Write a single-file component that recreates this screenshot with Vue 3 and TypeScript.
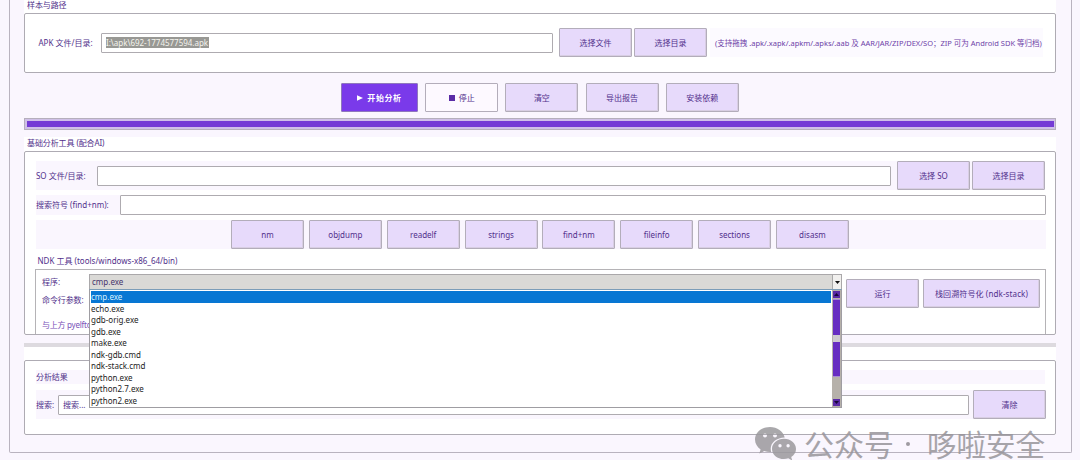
<script setup lang="ts">
import { ref } from 'vue'

const actions: string[] = ['清空', '导出报告', '安装依赖']
const tools: string[] = ['nm', 'objdump', 'readelf', 'strings', 'find+nm', 'fileinfo', 'sections', 'disasm']
const programs: string[] = [
  'cmp.exe', 'echo.exe', 'gdb-orig.exe', 'gdb.exe', 'make.exe',
  'ndk-gdb.cmd', 'ndk-stack.cmd', 'python.exe', 'python2.7.exe', 'python2.exe',
]
const selected = ref('cmp.exe')
const apkPath = 'I:\\apk\\692-1774577594.apk'
</script>

<template>
  <main class="app">
    <div class="frame">
      <section class="group">
        <div class="title first">样本与路径</div>
        <div class="panel sample">
          <div class="row apk-row">
            <label class="apk-label">APK 文件/目录:</label>
            <div class="entry apk-entry"><span class="selection">{{ apkPath }}</span></div>
            <button class="btn">选择文件</button>
            <button class="btn second">选择目录</button>
            <span class="hint">(支持拖拽 .apk/.xapk/.apkm/.apks/.aab 及 AAR/JAR/ZIP/DEX/SO；ZIP 可为 Android SDK 等归档)</span>
          </div>
        </div>
      </section>

      <div class="actions">
        <button class="btn start"><svg width="6" height="6" viewBox="0 0 6 6"><path d="M0 .2 6 3 0 5.8Z" fill="#fff" /></svg>开始分析</button>
        <button class="btn stop"><i class="square"></i>停止</button>
        <button v-for="a in actions" :key="a" class="btn">{{ a }}</button>
      </div>

      <div class="progress"><div class="fill"></div></div>

      <section class="group tools-group">
        <div class="title">基础分析工具 (配合AI)</div>
        <div class="panel tools">
          <div class="row so-row">
            <label class="so-label">SO 文件/目录:</label>
            <div class="entry grow"></div>
            <button class="btn so-btn">选择 SO</button>
            <button class="btn second">选择目录</button>
          </div>
          <div class="row sym-row">
            <label class="sym-label">搜索符号 (find+nm):</label>
            <div class="entry grow"></div>
          </div>
          <div class="row tool-row">
            <button v-for="t in tools" :key="t" class="btn latin">{{ t }}</button>
          </div>
          <div class="title ndk-title">NDK 工具 (tools/windows-x86_64/bin)</div>
          <div class="ndk">
            <div class="ndk-left">
              <div class="ndk-line">
                <label>程序:</label>
                <div class="combo">
                  <span>{{ selected }}</span>
                  <div class="arrow"><svg width="5" height="3" viewBox="0 0 5 3"><path d="M0 0H5L2.5 3Z" fill="#111" /></svg></div>
                  <div class="dropdown">
                    <ul>
                      <li v-for="p in programs" :key="p" :class="{ active: p === selected }">{{ p }}</li>
                    </ul>
                    <div class="scroll">
                      <div class="sbtn"><svg width="5" height="3" viewBox="0 0 5 3"><path d="M0 3H5L2.5 0Z" fill="#17073a" /></svg></div>
                      <div class="thumb"><i></i><b></b><i></i></div>
                      <div class="sbtn end"><svg width="5" height="3" viewBox="0 0 5 3"><path d="M0 0H5L2.5 3Z" fill="#17073a" /></svg></div>
                    </div>
                  </div>
                </div>
              </div>
              <div class="args">命令行参数:</div>
              <div class="note">与上方 pyelfto</div>
            </div>
            <button class="btn run">运行</button>
            <button class="btn stack">栈回溯符号化 (ndk-stack)</button>
          </div>
        </div>
      </section>

      <div class="sash"></div>

      <section class="group result-group">
        <div class="panel result">
          <div class="row result-title">分析结果</div>
          <div class="row search-row">
            <label>搜索:</label>
            <div class="entry grow">搜索...</div>
            <button class="btn">清除</button>
          </div>
        </div>
      </section>
    </div>

    <div class="watermark">
      <svg width="42" height="34" viewBox="0 0 42 34">
        <path fill="#9b999d" fill-rule="evenodd" d="M15 0C6.700 0 0 5.500 0 12.600c0 4 2.200 7.500 5.600 9.900L4.300 26.600l4.900-2.500c1.900.6 3.800.9 5.800.9h1.200C13.800 17 20.500 10.700 29.700 10.500 28.300 4.400 22.200 0 15 0ZM10 6.600a2 2 0 1 1 0 4 2 2 0 0 1 0-4Zm10 0a2 2 0 1 1 0 4 2 2 0 0 1 0-4Z" />
        <path fill="#9b999d" fill-rule="evenodd" d="M29 11.800c-6.700 0-12 4.500-12 10.100S22.300 32 29 32c1.500 0 3-.2 4.300-.7L37.200 33.500 36.200 30c2.900-1.900 4.800-4.800 4.800-8.100 0-5.600-5.300-10.100-12-10.100ZM25 17a1.700 1.700 0 1 1 0 3.400 1.700 1.700 0 0 1 0-3.400Zm8.100 0a1.700 1.700 0 1 1 0 3.400 1.700 1.700 0 0 1 0-3.400Z" />
      </svg>
      <span class="wm-a">公众号</span><i></i><span class="wm-b">哆啦安全</span>
    </div>
  </main>
</template>

<style>
body { margin: 0; overflow: hidden; }
</style>

<style scoped>
* { box-sizing: border-box; }
.app {
  position: relative;
  width: 1080px;
  height: 460px;
  overflow: hidden;
  background: #faf6fe;
  padding: 0 8px 0 9px;
  font-family: "Noto Sans", "Noto Sans CJK SC", sans-serif;
  font-size: 8px;
  line-height: 12px;
  color: #51318b;
}
.frame {
  height: 453px;
  border: 1px solid #b9b3bf;
  border-top: 0;
  border-radius: 0 0 2px 2px;
  padding: 0 15px 0 14px;
  white-space: nowrap;
}
.group { background: #fff; }
.title { height: 14px; padding-left: 3px; line-height: 12px; letter-spacing: -0.1px; }
.title.first { height: 13px; line-height: 10px; }
.panel { border: 1px solid #aeabb3; border-radius: 2px; }
.row { display: flex; align-items: center; background: #faf6fe; }
.entry {
  height: 20px;
  background: #fff;
  border: 1px solid #aeabb0;
  border-radius: 1px;
  padding: 0 4px;
  line-height: 18px;
}
.grow { flex: 1; }
.btn {
  flex: none;
  width: 73px;
  height: 29px;
  margin: 0;
  padding: 0;
  border: 1px solid #b3adba;
  border-radius: 1px;
  background: #e7dafb;
  box-shadow: inset -1px -1px 0 #d8cee3;
  font: inherit;
  color: #51308b;
  display: flex;
  align-items: center;
  justify-content: center;
}
.sample { height: 60px; padding: 14px 12px 0 11px; }
.apk-row { height: 29px; background: #fff; }
.apk-label { width: 65px; padding-left: 2.500px; }
.apk-entry { width: 452px; margin-right: 6px; padding-left: 4px; display: flex; align-items: center; }
.selection { height: 11px; line-height: 11px; width: 103px; background: #989894; color: #f4f4ed; letter-spacing: -0.01px; }
.second { margin-left: 2px; }
.hint { flex: 1; height: 29px; line-height: 30px; margin-left: 3px; padding-left: 5px; background: #fcfaff; color: #6e42a8; font-size: 7.5px; }
.actions { display: flex; padding: 10px 0 0 317px; height: 45px; gap: 7.2px; }
.start { width: 77px; background: #7a3aea; color: #fff; font-weight: 700; box-shadow: none; gap: 4px; border-color: #8f77bd; letter-spacing: 0.6px; }
.stop { background: #fdf9ff; box-shadow: none; gap: 4px; }
.square { width: 6px; height: 6px; background: #5a2ca6; }
.progress { height: 12px; border: 1px solid #b5afbc; background: #cfc0e8; padding: 2px 1.500px; }
.fill { height: 6px; background: #743bd5; }
.tools-group { margin-top: 7px; height: 198px; }
.tools { height: 184px; padding: 9px 9px 0 10px; border-color: #aeabb3; }
.so-row { height: 29px; margin: 0 1px; }
.so-label { width: 61px; letter-spacing: -0.02px; }
.so-btn { margin-left: 6px; }
.sym-row { height: 20px; margin: 5px 0 5px 1px; }
.sym-label { width: 83.500px; }
.tool-row { height: 29px; margin-left: 1px; padding-left: 195px; gap: 4.850px; }
.ndk-title { height: 20px; line-height: 24px; padding-left: 2.500px; letter-spacing: 0; }
.ndk {
  display: flex;
  height: 65px;
  border: 1px solid #b5b3b6;
  border-bottom: 0;
  padding: 4px 5px 0 6px;
}
.ndk-left { width: 800px; margin-right: 4px; }
.ndk-line { display: flex; height: 16px; align-items: center; }
.ndk-line label { width: 47px; }
.args { height: 20px; line-height: 20px; letter-spacing: -0.1px; }
.note { width: 47px; overflow: hidden; height: 24px; line-height: 29px; letter-spacing: -0.25px; color: #7950b8; }
.combo {
  position: relative;
  display: flex;
  width: 753px;
  height: 16px;
  border: 1px solid #aaa8aa;
  background: #dad9d6;
  padding-left: 2px;
  color: #47356d;
}
.combo span { flex: 1; line-height: 14px; }
.arrow {
  width: 9px;
  border-left: 1px solid #aaa;
  background: #f1f0ee;
  display: flex;
  align-items: center;
  justify-content: center;
}
.dropdown {
  position: absolute;
  z-index: 5;
  left: -1px;
  top: 14px;
  width: 753px;
  height: 119px;
  display: flex;
  background: #fff;
  border: 1px solid #9f9da2;
  border-top-color: #7c9db8;
}
.dropdown ul { flex: 1; margin: 0; padding: 1px 1px; list-style: none; color: #242424; }
.dropdown li { height: 11.550px; line-height: 11px; }
.dropdown li.active { background: #0877d3; color: #d9f2ff; }
.scroll { width: 9px; background: #b6b1aa; display: flex; flex-direction: column; padding: 1px; }
.sbtn { height: 7px; background: #5a2aa6; display: flex; align-items: center; justify-content: center; }
.sbtn.end { margin-top: auto; }
.thumb { margin-top: 1px; height: 78px; display: flex; flex-direction: column; border: 1px solid #a98bd5; border-width: 1px 0; }
.thumb i { flex: 1; background: #672dc2; }
.thumb b { height: 7px; background: #cfcad0; }
.run { margin-top: 5px; }
.stack { margin: 5px 0 0 4px; width: 117px; letter-spacing: 0.12px; }
.sash { height: 12px; border-bottom: 4px solid #dddadf; }
.result-group { padding-top: 13px; }
.result { height: 75px; padding: 9px 10px 0 11px; }
.result-title { height: 14px; margin-bottom: 6px; letter-spacing: -0.1px; }
.search-row { height: 29px; margin-right: -1px; }
.search-row label { width: 22px; }
.search-row .btn { margin-left: 4px; }
.watermark {
  position: absolute;
  left: 755px;
  top: 427px;
  display: flex;
  align-items: flex-start;
  font-family: "Noto Sans CJK SC", sans-serif;
  font-size: 30px;
  font-weight: 400;
  line-height: 32px;
  color: #98959b;
  opacity: 0.85;
  white-space: nowrap;
}
.wm-a { margin-left: 7px; }
.watermark i { width: 4px; height: 4px; border-radius: 50%; background: #8e8b91; margin: 15px 17px 0 12px; }
.wm-b { font-size: 29.500px; }
</style>
